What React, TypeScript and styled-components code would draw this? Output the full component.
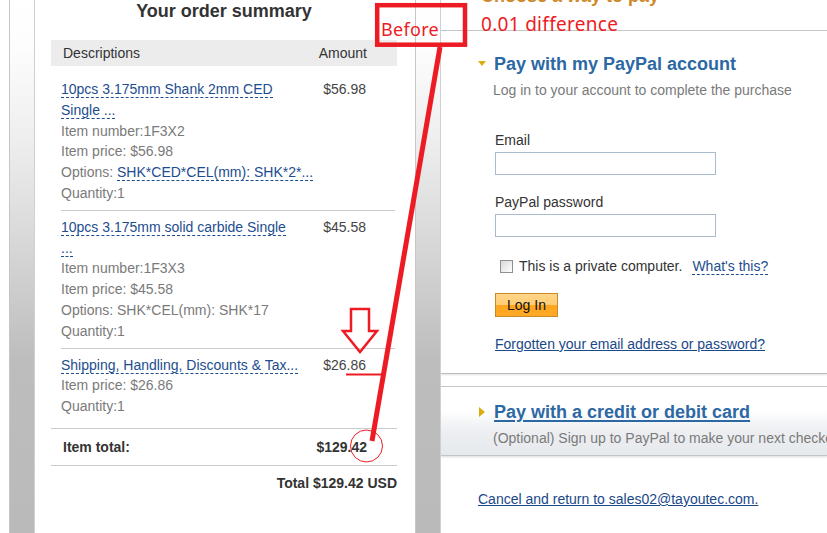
import { Fragment } from 'react'
import styled, { createGlobalStyle } from 'styled-components'

const GlobalStyle = createGlobalStyle`
  html, body {
    margin: 0;
    padding: 0;
    background: #fff;
  }
  body {
    font-family: "Liberation Sans", Arial, sans-serif;
    font-size: 14px;
    color: #333;
  }
`

type Item = {
  title: string[]
  number?: string
  price: string
  options?: { value: string; link: boolean }
  qty: number
  amount: string
}

const items: Item[] = [
  {
    title: ['10pcs 3.175mm Shank 2mm CED', 'Single ...'],
    number: '1F3X2',
    price: '$56.98',
    options: { value: 'SHK*CED*CEL(mm): SHK*2*...', link: true },
    qty: 1,
    amount: '$56.98',
  },
  {
    title: ['10pcs 3.175mm solid carbide Single', '...'],
    number: '1F3X3',
    price: '$45.58',
    options: { value: 'SHK*CEL(mm): SHK*17', link: false },
    qty: 1,
    amount: '$45.58',
  },
  {
    title: ['Shipping, Handling, Discounts & Tax...'],
    price: '$26.86',
    qty: 1,
    amount: '$26.86',
  },
]

const App = () => {
  return (
    <>
      <GlobalStyle />
      <PageSC>
        <MarginSC />
        <GutterSC />
        <OrderPanelSC>
          <TitleSC>Your order summary</TitleSC>
          <TableHeadSC>
            <span>Descriptions</span>
            <span>Amount</span>
          </TableHeadSC>
          <ItemListSC>
            {items.map((item, index) => (
              <ItemRowSC key={index} last={index === items.length - 1}>
                <DescSC>
                  <DotLinkSC>
                    {item.title.map((line, i) => (
                      <Fragment key={i}>
                        {i > 0 && <br />}
                        {line}
                      </Fragment>
                    ))}
                  </DotLinkSC>
                  {item.number && <div>Item number:{item.number}</div>}
                  <div>Item price: {item.price}</div>
                  {item.options && (
                    <div>
                      Options:{' '}
                      {item.options.link
                        ? <DotLinkSC>{item.options.value}</DotLinkSC>
                        : item.options.value}
                    </div>
                  )}
                  <div>Quantity:{item.qty}</div>
                </DescSC>
                <AmountSC>{item.amount}</AmountSC>
              </ItemRowSC>
            ))}
          </ItemListSC>
          <ItemTotalSC>
            <span>Item total:</span>
            <span>$129.42</span>
          </ItemTotalSC>
          <GrandTotalSC>Total $129.42 USD</GrandTotalSC>
        </OrderPanelSC>
        <GutterSC />
        <PayPanelSC>
          <PayHeaderSC>
            <ChooseSC>Choose a way to pay</ChooseSC>
          </PayHeaderSC>
          <AccountSectionSC>
            <SectionHeadSC>
              <TriangleSC open />
              <SectionTitleSC>Pay with my PayPal account</SectionTitleSC>
            </SectionHeadSC>
            <SectionSubSC>Log in to your account to complete the purchase</SectionSubSC>
            <FormSC>
              <LabelSC>Email</LabelSC>
              <InputSC type="text" />
              <LabelSC spaced>PayPal password</LabelSC>
              <InputSC type="password" />
              <CheckRowSC>
                <CheckBoxSC />
                <span>This is a private computer.</span>
                <WhatSC>What's this?</WhatSC>
              </CheckRowSC>
              <LoginSC>Log In</LoginSC>
              <UnderLinkSC>Forgotten your email address or password?</UnderLinkSC>
            </FormSC>
          </AccountSectionSC>
          <CardSectionSC>
            <SectionHeadSC>
              <TriangleSC open={false} />
              <SectionTitleSC underline>Pay with a credit or debit card</SectionTitleSC>
            </SectionHeadSC>
            <SectionSubSC>(Optional) Sign up to PayPal to make your next checkout faster.</SectionSubSC>
          </CardSectionSC>
          <CancelSC>
            <UnderLinkSC>Cancel and return to sales02@tayoutec.com.</UnderLinkSC>
          </CancelSC>
        </PayPanelSC>

        <OverlaySC width="827" height="533" viewBox="0 0 827 533">
          <rect x="377.2" y="5.2" width="87.8" height="39.5" fill="none" stroke="#ed1c24" strokeWidth="4.5" />
          <line x1="440" y1="47" x2="372" y2="441" stroke="#ed1c24" strokeWidth="5" />
          <polygon
            points="351,309 369,309 369,331 377,331 360,352 343,331 351,331"
            fill="none" stroke="#ed1c24" strokeWidth="2.5" strokeLinejoin="miter"
          />
          <line x1="346" y1="374.5" x2="384" y2="374.5" stroke="#ed1c24" strokeWidth="2" />
          <circle cx="366.5" cy="446" r="16" fill="none" stroke="#ed1c24" strokeWidth="1" />
        </OverlaySC>
        <NoteSC x={381} y={19.8} size={18} spacing={0.3}>Before</NoteSC>
        <NoteSC x={481} y={14.8} size={19} spacing={0.3}>0.01 difference</NoteSC>
      </PageSC>
    </>
  )
}

export default App

const PageSC = styled('div')`
  position: relative;
  width: 827px;
  height: 533px;
  overflow: hidden;
  display: flex;
  background: #fff;
`

const MarginSC = styled('div')`
  width: 9px;
  flex: none;
`

const GutterSC = styled('div')`
  width: 26px;
  flex: none;
  box-sizing: border-box;
  border-left: 1px solid #c6c6c6;
  border-right: 1px solid #d0d0d0;
  background: linear-gradient(
    to bottom,
    #fff 0,
    #fdfdfd 45px,
    #eeeeee 140px,
    #d6d6d6 250px,
    #bdbdbd 360px,
    #bababa 100%
  );
`

const OrderPanelSC = styled('section')`
  width: 380px;
  flex: none;
  box-sizing: border-box;
  padding: 0 18px 0 16px;
`

const TitleSC = styled('h2')`
  margin: 0 0 18px;
  font-size: 18px;
  line-height: 22px;
  font-weight: bold;
  text-align: center;
  color: #333;
`

const TableHeadSC = styled('div')`
  display: flex;
  justify-content: space-between;
  height: 26px;
  line-height: 26px;
  padding: 0 30px 0 12px;
  background: #ececec;
  color: #333;
`

const ItemListSC = styled('div')`
  margin-top: 7px;
`

const ItemRowSC = styled('div')<{ last: boolean }>`
  display: grid;
  grid-template-columns: 1fr auto;
  margin: 0 2px 0 10px;
  padding: 6px 0 ${p => (p.last ? '11px' : '6px')};
  border-bottom: ${p => (p.last ? 'none' : '1px solid #cbcbcb')};
  line-height: 20.8px;
`

const DescSC = styled('div')`
  color: #7a7a7a;
  white-space: nowrap;
`

const DotLinkSC = styled('span')`
  color: #1d4d8e;
  border-bottom: 1px dashed #1d4d8e;
  cursor: pointer;
`

const AmountSC = styled('div')`
  padding-right: 29px;
  text-align: right;
  color: #444;
`

const ItemTotalSC = styled('div')`
  display: flex;
  justify-content: space-between;
  padding: 0 30px 0 12px;
  line-height: 36px;
  border-top: 1px solid #cbcbcb;
  border-bottom: 1px solid #cbcbcb;
  font-weight: bold;
  color: #333;
`

const GrandTotalSC = styled('div')`
  margin-top: 7px;
  line-height: 20px;
  text-align: right;
  font-weight: bold;
  color: #333;
`

const PayPanelSC = styled('section')`
  flex: 1;
  min-width: 0;
  overflow: hidden;
  white-space: nowrap;
`

const PayHeaderSC = styled('div')`
  display: flow-root;
  height: 30px;
  padding-left: 40px;
  border-bottom: 1px solid #c8c8c8;
`

const ChooseSC = styled('h1')`
  margin: -15px 0 0;
  font-size: 18px;
  line-height: 22px;
  font-weight: bold;
  color: #cd8a2c;
`

const AccountSectionSC = styled('div')`
  padding: 22px 0 19px 37px;
  border-bottom: 1px solid #bdbdbd;
  box-shadow: 0 1px 2px rgba(0, 0, 0, 0.12);
`

const CardSectionSC = styled('div')`
  margin-top: 12px;
  padding: 14px 0 7px 37px;
  border-top: 1px solid #c8c8c8;
  border-bottom: 1px solid #c4c4c4;
  box-shadow: 0 1px 2px rgba(0, 0, 0, 0.14);
  background: linear-gradient(to bottom, #fff 0, #fff 35%, #eceef1 65%, #e7eaed 100%);
`

const SectionHeadSC = styled('div')`
  display: flex;
  align-items: center;
`

const TriangleSC = styled('span')<{ open: boolean }>`
  flex: none;
  width: 16px;
  height: 22px;
  position: relative;
  &::before {
    content: '';
    position: absolute;
    width: 0;
    height: 0;
    ${p =>
      p.open
        ? `left: 0; top: 8px;
           border-left: 4.5px solid transparent;
           border-right: 4.5px solid transparent;
           border-top: 5.5px solid #d9ad0c;`
        : `left: 1px; top: 6px;
           border-top: 5px solid transparent;
           border-bottom: 5px solid transparent;
           border-left: 6px solid #d9ad0c;`}
  }
`

const SectionTitleSC = styled('h3')<{ underline?: boolean }>`
  margin: 0;
  font-size: 18px;
  line-height: 22px;
  font-weight: bold;
  color: #2c68a4;
  text-decoration: ${p => (p.underline ? 'underline' : 'none')};
  text-decoration-thickness: 2px;
  text-underline-offset: 2px;
  cursor: ${p => (p.underline ? 'pointer' : 'default')};
`

const SectionSubSC = styled('p')`
  margin: 5px 0 0 15px;
  line-height: 20px;
  color: #7a7a7a;
`

const FormSC = styled('div')`
  display: flex;
  flex-direction: column;
  align-items: flex-start;
  margin: 30px 0 0 17px;
`

const LabelSC = styled('label')<{ spaced?: boolean }>`
  margin-top: ${p => (p.spaced ? '17px' : '0')};
  margin-bottom: 2px;
  line-height: 20px;
  color: #333;
`

const InputSC = styled('input')`
  width: 221px;
  height: 23px;
  box-sizing: border-box;
  margin: 0;
  border: 1px solid #a9bccf;
  background: #fff;
  font: inherit;
`

const CheckRowSC = styled('div')`
  display: flex;
  align-items: center;
  margin-top: 19px;
  line-height: 20px;
  color: #333;
`

const CheckBoxSC = styled('span')`
  width: 13px;
  height: 13px;
  box-sizing: border-box;
  margin: 0 6px 0 5px;
  border: 1px solid #8e8f8f;
  background: linear-gradient(135deg, #d8d8d8 0, #f4f4f4 70%, #fff 100%);
`

const WhatSC = styled('span')`
  margin-left: 10px;
  color: #1d4d8e;
  line-height: 16px;
  border-bottom: 1px dashed #1d4d8e;
  cursor: pointer;
`

const LoginSC = styled('button')`
  margin-top: 17px;
  width: 63px;
  height: 24px;
  padding: 0;
  border: 1px solid #c98b26;
  background: linear-gradient(to bottom, #ffd58a 0, #ffcd74 50%, #ffa61f 50%, #ffa925 100%);
  font-family: "Liberation Sans", Arial, sans-serif;
  font-size: 14px;
  color: #111;
  cursor: pointer;
`

const UnderLinkSC = styled('a')`
  display: inline-block;
  margin-top: 17px;
  line-height: 20px;
  color: #1a4888;
  text-decoration: underline;
  cursor: pointer;
`

const CancelSC = styled('div')`
  padding: 16px 0 0 37px;
`

const OverlaySC = styled('svg')`
  position: absolute;
  left: 0;
  top: 0;
  pointer-events: none;
`

const NoteSC = styled('span')<{ x: number; y: number; size: number; spacing: number }>`
  position: absolute;
  left: ${p => p.x}px;
  top: ${p => p.y}px;
  font-family: "Noto Sans", "Open Sans", sans-serif;
  font-size: ${p => p.size}px;
  letter-spacing: ${p => p.spacing}px;
  line-height: 1;
  color: #ed1c24;
  white-space: nowrap;
  pointer-events: none;
`
